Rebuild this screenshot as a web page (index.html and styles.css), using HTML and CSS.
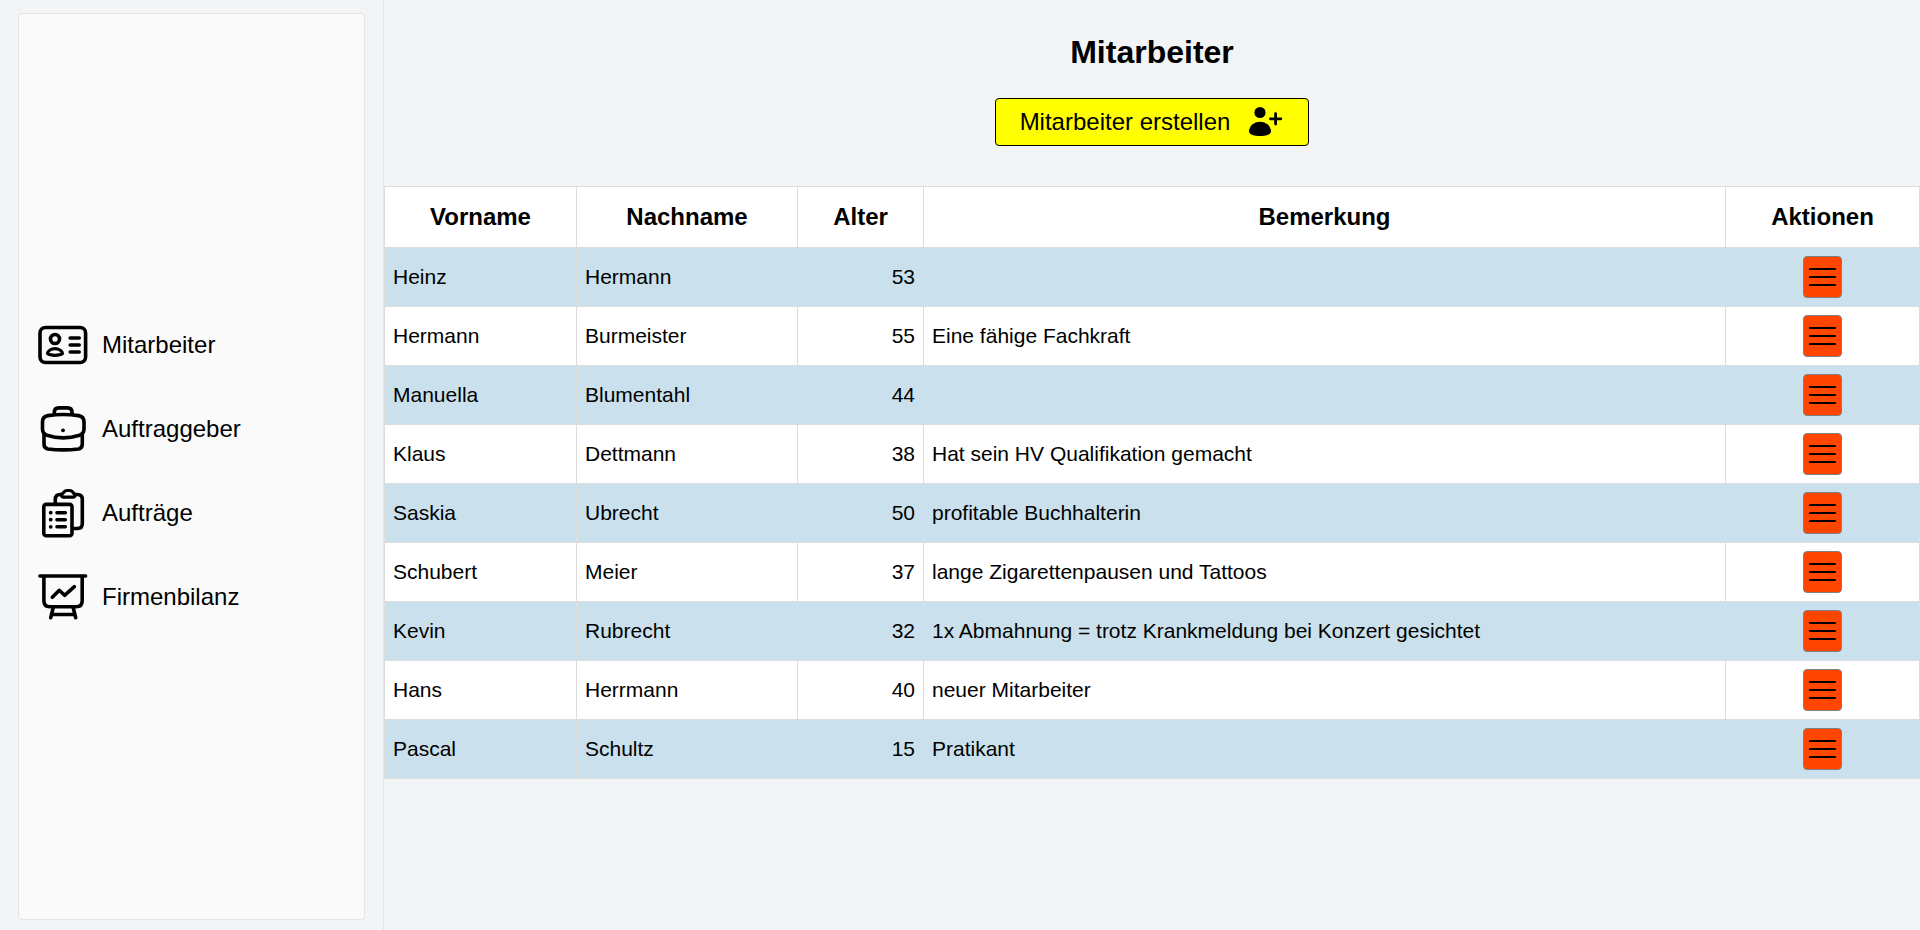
FILE: index.html
```html
<!DOCTYPE html>
<html lang="de">
<head>
<meta charset="utf-8">
<title>Mitarbeiter</title>
<link rel="stylesheet" href="styles.css">
</head>
<body>
<svg class="sprite" aria-hidden="true">
  <symbol id="menu" viewBox="0 0 29 20">
    <path d="M2 2h25M2 10h25M2 18h25" fill="none" stroke="#000" stroke-width="2.200" stroke-linecap="round"/>
  </symbol>
</svg>
<div class="layout">
  <aside class="sidebar">
    <nav class="panel">
      <a class="nav-link" href="#mitarbeiter">
        <svg class="nav-icon" viewBox="0 0 60 60" aria-hidden="true">
          <rect x="7" y="12.500" width="45.600" height="35" rx="5.500"/>
          <circle cx="22" cy="24" r="4.500"/>
          <path class="fine" d="M14.500 38.600C15 35.500 18.300 33.700 22 33.700s7 1.800 7.500 4.900C28 39.800 25.500 40.400 22 40.400S16 39.800 14.500 38.600z"/>
          <path d="M37.200 23h9M37.200 30h9M37.200 37h9"/>
        </svg>
        <span>Mitarbeiter</span>
      </a>
      <a class="nav-link" href="#auftraggeber">
        <svg class="nav-icon" viewBox="0 0 60 60" aria-hidden="true">
          <path d="M21.300 14.500V13.500Q21.300 8.900 26 8.900h8.500Q39 8.900 39 13.500v1"/>
          <path d="M15 16.600Q30 14.500 45.500 16.600 51 17.500 51 23v7Q51 34.500 46.500 36.200 30 41.500 14 36.200 9.500 34.500 9.500 30v-7Q9.500 17.500 15 16.600z"/>
          <path d="M11 35v10Q11 49.200 15 50 30 51.800 45.500 50 49.300 49.200 49.300 45V35"/>
          <circle class="dot" cx="30" cy="31.300" r="1.900"/>
        </svg>
        <span>Auftraggeber</span>
      </a>
      <a class="nav-link" href="#auftraege">
        <svg class="nav-icon" viewBox="0 0 60 60" aria-hidden="true">
          <rect x="10.800" y="21.400" width="28.200" height="31.400" rx="2.400"/>
          <path d="M22.300 20v-3.500Q22.300 11.500 27 11.500h1.500M42 11.500h2.500Q49.300 11.500 49.300 16.500V40.500Q49.300 45.500 44.500 45.500H41"/>
          <path class="fine" d="M28.600 12Q28.600 10.800 30 10.300 31.600 7.500 34 7.500h2.800Q39.200 7.500 40.600 10.300 42 10.800 42 12 42 14.200 39.800 14.200h-9Q28.600 14.200 28.600 12z"/>
          <path d="M24 29.700h8.300M24 36.700h8.300M24 43.800h8.300"/>
          <circle class="dot" cx="17.700" cy="29.700" r="1.900"/>
          <circle class="dot" cx="17.700" cy="36.700" r="1.900"/>
          <circle class="dot" cx="17.700" cy="43.800" r="1.900"/>
        </svg>
        <span>Aufträge</span>
      </a>
      <a class="nav-link" href="#firmenbilanz">
        <svg class="nav-icon" viewBox="0 0 60 60" aria-hidden="true">
          <path d="M7 9h45.600M10.900 9v24.700q0 6 6 6h26.300q6 0 6-6V9"/>
          <path d="M19.300 30.300l7-7 5.300 5 9.800-8.600"/>
          <path d="M20 41.500l-2.300 9.200M40.400 41.500l2.300 9.200M19 47.500h22.400"/>
        </svg>
        <span>Firmenbilanz</span>
      </a>
    </nav>
  </aside>
  <main class="content">
    <h1 class="title">Mitarbeiter</h1>
    <button class="create" type="button">
      <span>Mitarbeiter erstellen</span>
      <svg class="create-icon" viewBox="0 0 40 40" aria-hidden="true">
        <circle cx="16" cy="10.500" r="5.600"/>
        <path d="M5 29.500C5 24 10 19.700 16 19.700S27 24 27 29.500C27 32.800 21.500 34 16 34S5 32.800 5 29.500z"/>
        <path class="plus" d="M31.600 11.600v10.400M26.400 16.800h10.400"/>
      </svg>
    </button>
    <table class="staff">
      <colgroup><col class="c-first"><col class="c-last"><col class="c-age"><col><col class="c-action"></colgroup>
      <thead>
        <tr><th>Vorname</th><th>Nachname</th><th>Alter</th><th>Bemerkung</th><th>Aktionen</th></tr>
      </thead>
      <tbody>
        <tr><td>Heinz</td><td>Hermann</td><td class="age">53</td><td></td><td class="action"><button class="menu" type="button" aria-label="Aktionen für Heinz Hermann"><svg class="menu-icon"><use href="#menu"/></svg></button></td></tr>
        <tr><td>Hermann</td><td>Burmeister</td><td class="age">55</td><td>Eine fähige Fachkraft</td><td class="action"><button class="menu" type="button" aria-label="Aktionen für Hermann Burmeister"><svg class="menu-icon"><use href="#menu"/></svg></button></td></tr>
        <tr><td>Manuella</td><td>Blumentahl</td><td class="age">44</td><td></td><td class="action"><button class="menu" type="button" aria-label="Aktionen für Manuella Blumentahl"><svg class="menu-icon"><use href="#menu"/></svg></button></td></tr>
        <tr><td>Klaus</td><td>Dettmann</td><td class="age">38</td><td>Hat sein HV Qualifikation gemacht</td><td class="action"><button class="menu" type="button" aria-label="Aktionen für Klaus Dettmann"><svg class="menu-icon"><use href="#menu"/></svg></button></td></tr>
        <tr><td>Saskia</td><td>Ubrecht</td><td class="age">50</td><td>profitable Buchhalterin</td><td class="action"><button class="menu" type="button" aria-label="Aktionen für Saskia Ubrecht"><svg class="menu-icon"><use href="#menu"/></svg></button></td></tr>
        <tr><td>Schubert</td><td>Meier</td><td class="age">37</td><td>lange Zigarettenpausen und Tattoos</td><td class="action"><button class="menu" type="button" aria-label="Aktionen für Schubert Meier"><svg class="menu-icon"><use href="#menu"/></svg></button></td></tr>
        <tr><td>Kevin</td><td>Rubrecht</td><td class="age">32</td><td>1x Abmahnung = trotz Krankmeldung bei Konzert gesichtet</td><td class="action"><button class="menu" type="button" aria-label="Aktionen für Kevin Rubrecht"><svg class="menu-icon"><use href="#menu"/></svg></button></td></tr>
        <tr><td>Hans</td><td>Herrmann</td><td class="age">40</td><td>neuer Mitarbeiter</td><td class="action"><button class="menu" type="button" aria-label="Aktionen für Hans Herrmann"><svg class="menu-icon"><use href="#menu"/></svg></button></td></tr>
        <tr><td>Pascal</td><td>Schultz</td><td class="age">15</td><td>Pratikant</td><td class="action"><button class="menu" type="button" aria-label="Aktionen für Pascal Schultz"><svg class="menu-icon"><use href="#menu"/></svg></button></td></tr>
      </tbody>
    </table>
  </main>
</div>
</body>
</html>
```
FILE: styles.css
```css
*, *::before, *::after { box-sizing: border-box; }
body {
  margin: 0;
  background: #f3f4f6;
  color: #000;
  font-family: "Liberation Sans", Arial, sans-serif;
}
.sprite { display: none; }
.layout {
  display: grid;
  grid-template-columns: 20% minmax(0, 1fr);
  min-height: 100vh;
}
.sidebar {
  display: flex;
  padding: 13px 18px 10px;
  border-right: 1px solid #e2e3e4;
}
.panel {
  flex: 1;
  display: flex;
  flex-direction: column;
  justify-content: center;
  gap: 24px;
  padding: 8px 14px 0;
  background: #fafafa;
  border: 1px solid #e4e4e4;
  border-radius: 4px;
}
.nav-link {
  display: flex;
  align-items: center;
  gap: 9px;
  color: inherit;
  font-size: 24px;
  text-decoration: none;
}
.nav-icon {
  width: 60px;
  height: 60px;
  fill: none;
  stroke: #000;
  stroke-width: 3.600;
  stroke-linecap: round;
  stroke-linejoin: round;
}
.nav-icon .fine { stroke-width: 3.200; }
.nav-icon .dot { fill: #000; stroke: none; }
.content {
  display: flex;
  flex-direction: column;
  align-items: center;
  padding-top: 32px;
}
.title {
  margin: 0 0 26px;
  font-size: 32px;
  line-height: 40px;
}
.create {
  display: flex;
  align-items: center;
  gap: 14px;
  height: 48px;
  margin-bottom: 40px;
  padding: 0 24px;
  background: #ff0;
  border: 1px solid #000;
  border-radius: 4px;
  color: inherit;
  font: inherit;
  font-size: 24px;
}
.create-icon { width: 40px; height: 40px; }
.plus {
  fill: none;
  stroke: #000;
  stroke-width: 2.800;
  stroke-linecap: round;
}
.staff {
  width: 100%;
  table-layout: fixed;
  border-collapse: collapse;
  background: #fff;
  font-size: 21px;
}
.c-first { width: 192px; }
.c-last { width: 221px; }
.c-age { width: 126px; }
.c-action { width: 194px; }
.staff th, .staff td {
  border: 1px solid #ddd;
  padding: 8px;
}
.staff th { height: 61px; font-size: 24px; }
.staff td { height: 59px; text-align: left; }
.staff tbody tr:nth-child(odd) { background: #cae0ec; }
.staff .age { text-align: right; }
.staff .action { text-align: center; }
.menu {
  display: inline-flex;
  align-items: center;
  justify-content: center;
  width: 39px;
  height: 42px;
  padding: 0;
  vertical-align: middle;
  background: #ff4500;
  border: 1px solid #808080;
  border-radius: 4px;
}
.menu-icon { flex: none; width: 29px; height: 20px; }
```
